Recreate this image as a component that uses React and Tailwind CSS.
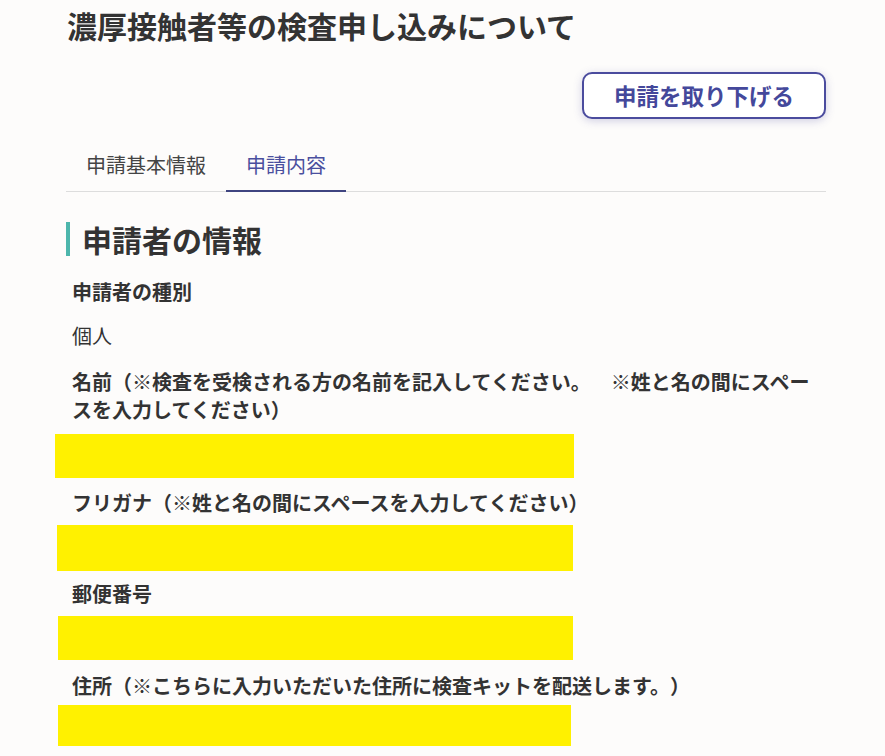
const font = {
  fontFamily: '"Noto Sans CJK JP", "Noto Sans", sans-serif',
};

const Redacted = ({ className }) => (
  <div className={`bg-[#fff100] ${className}`} />
);

const App = () => {
  return (
    <div
      className="min-h-screen w-full bg-[#fdfcfb] text-[#333333] [text-spacing-trim:space-all]"
      style={font}
    >
      <div className="ml-[66px] flex w-[760px] flex-col">
        <h1 className="mt-[5px] pl-px text-[30px] font-bold leading-[40px] text-[#333333]">
          濃厚接触者等の検査申し込みについて
        </h1>

        <div className="mt-[27px] flex justify-end">
          <button className="flex h-[47px] w-[244px] items-center justify-center rounded-[10px] border-2 border-[#4b4c9e] bg-white text-[22.5px] font-bold text-[#44489b] shadow-[0_2px_8px_rgba(75,76,158,0.25)]">
            申請を取り下げる
          </button>
        </div>

        <div className="mt-[22px] flex border-b border-[#dddddd]">
          <div className="px-5 pb-[12px] pt-[10px] text-[20px] leading-[28px] text-[#444444]">
            申請基本情報
          </div>
          <div className="-mb-px border-b-2 border-[#3f4480] px-5 pb-[11px] pt-[10px] text-[20px] leading-[28px] text-[#4a4f9e]">
            申請内容
          </div>
        </div>

        <h2 className="mt-[30px] border-l-4 border-[#4db6ac] pl-3 text-[30px] font-bold leading-[34px]">
          申請者の情報
        </h2>

        <div className="flex flex-col pl-[6px] text-[20px] leading-[28px]">
          <p className="mt-[22px] font-bold">申請者の種別</p>
          <p className="mt-[16px]">個人</p>
          <p className="mt-[18px] font-bold">
            名前（※検査を受検される方の名前を記入してください。　※姓と名の間にスペースを入力してください）
          </p>
          <Redacted className="-ml-[17px] mt-[10px] h-[44px] w-[519px]" />
          <p className="mt-[11px] font-bold">
            フリガナ（※姓と名の間にスペースを入力してください）
          </p>
          <Redacted className="-ml-[15px] mt-[8px] h-[46px] w-[516px]" />
          <p className="mt-[9px] font-bold">郵便番号</p>
          <Redacted className="-ml-[14px] mt-[8px] h-[44px] w-[515px]" />
          <p className="mt-[12px] font-bold">
            住所（※こちらに入力いただいた住所に検査キットを配送します。）
          </p>
          <Redacted className="-ml-[14px] mt-[5px] h-[41px] w-[513px]" />
        </div>
      </div>
    </div>
  );
};

export default App;
